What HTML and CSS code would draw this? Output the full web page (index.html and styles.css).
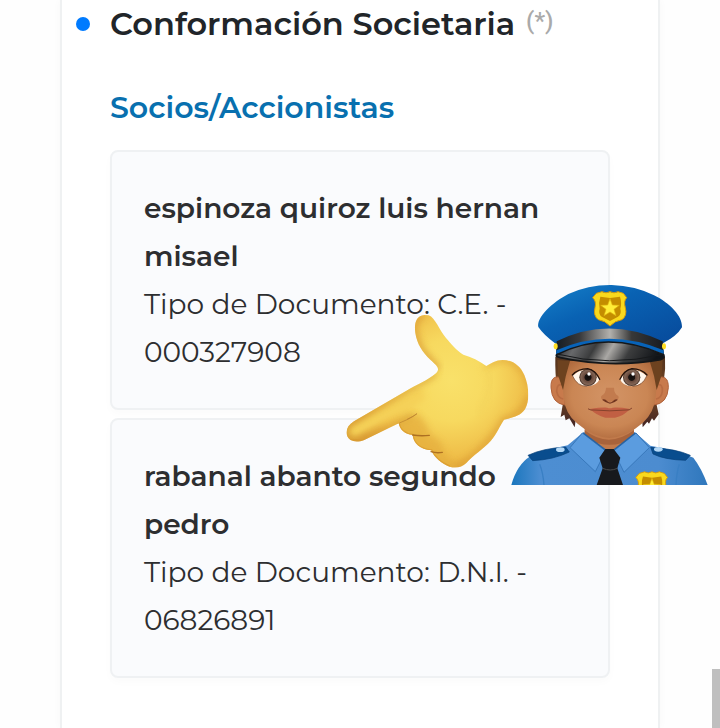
FILE: index.html
```html
<!DOCTYPE html>
<html lang="es">
<head>
    <meta charset="UTF-8">
    <meta name="viewport" content="width=device-width, initial-scale=1.0">
    <title>Conformación Societaria</title>
    <link rel="stylesheet" href="styles.css">
</head>
<body>
    <main class="page">
        <section class="panel">
            <div class="panel-header">
                <span class="bullet"></span>
                <h1>Conformación Societaria <span class="note">(*)</span></h1>
            </div>
            <div class="panel-body">
                <h2>Socios/Accionistas</h2>
                <ul class="partners">
                    <li class="card">
                        <strong>espinoza quiroz luis hernan misael</strong>
                        <p>Tipo de Documento: C.E. - 000327908</p>
                    </li>
                    <li class="card">
                        <strong>rabanal abanto segundo pedro</strong>
                        <p>Tipo de Documento: D.N.I. - 06826891</p>
                    </li>
                </ul>
            </div>
        </section>

        <!-- Pointing hand -->
        <svg class="sticker hand" viewBox="30 24 555 468" aria-hidden="true">
            <defs>
                <radialGradient id="skin" gradientUnits="userSpaceOnUse" cx="350" cy="225" r="310">
                    <stop offset="0" stop-color="#f9e16a"/>
                    <stop offset=".4" stop-color="#f7d95f"/>
                    <stop offset=".75" stop-color="#efbd48"/>
                    <stop offset="1" stop-color="#dc9e35"/>
                </radialGradient>
                <filter id="soft" x="-20%" y="-20%" width="140%" height="140%"><feGaussianBlur stdDeviation="9"/></filter>
                <clipPath id="handShape">
                    <path d="M268 30C243 32 237 56 241 84C246 117 263 143 286 164C307 183 316 190 303 205C278 226 248 238 213 258L57 349C39 360 32 374 36 391C42 410 64 414 88 405L191 355C195 374 210 389 233 390C235 415 256 433 289 436C298 459 322 477 344 485C362 491 380 487 394 474C414 451 445 433 467 408C486 386 494 363 507 344C533 338 555 334 570 313C585 287 582 243 568 210C555 181 532 165 503 165C483 165 468 175 454 183C434 167 408 156 385 149C364 137 347 115 333 99C313 76 301 38 281 31Z"/>
                </clipPath>
            </defs>
            <g clip-path="url(#handShape)">
                <rect x="20" y="20" width="580" height="480" fill="url(#skin)"/>
                <path d="M55 378L250 272" fill="none" stroke="#f5d158" stroke-width="40" stroke-linecap="round" filter="url(#soft)"/>
                <path d="M266 36C243 32 237 56 241 84C246 117 263 143 286 164L310 192" fill="none" stroke="#d99a35" stroke-width="18" opacity=".75" filter="url(#soft)"/>
                <path d="M303 205C278 226 248 238 213 258L57 349Q32 364 36 391Q44 412 88 405L191 355L235 332" fill="none" stroke="#d59a32" stroke-width="14" opacity=".75" filter="url(#soft)"/>
                <path d="M190 352Q222 345 247 328Q270 348 287 390Q322 406 326 437Q340 465 378 492L250 492L180 400Z" fill="#e4ad3d" opacity=".7" filter="url(#soft)"/>
                <path d="M360 490Q450 440 507 344Q565 333 582 270" fill="none" stroke="#d99a30" stroke-width="18" opacity=".65" filter="url(#soft)"/>
                <path d="M454 183Q485 160 520 166Q575 190 580 250" fill="none" stroke="#db9c32" stroke-width="12" opacity=".65" filter="url(#soft)"/>
                <path d="M440 190Q470 198 466 237Q462 282 430 325" fill="none" stroke="#e9bd4c" stroke-width="8" opacity=".25" filter="url(#soft)"/>
                <path d="M191 355Q195 384 233 390Q237 430 289 436Q300 465 344 485" fill="none" stroke="#d49027" stroke-width="7" opacity=".5"/>
            </g>
            <path d="M193 354Q222 344 246 326Q235 336 217 342" fill="none" stroke="#b9802f" stroke-width="2"/>
            <path d="M233 390Q257 394 283 391M288 440Q304 445 322 442" fill="none" stroke="#ad7022" stroke-width="4" stroke-linecap="round"/>
        </svg>

        <!-- Police officer -->
        <svg class="sticker officer" viewBox="33 27 591 603" aria-hidden="true">
            <defs>
                <linearGradient id="cap" x1="0" y1="0" x2="1" y2="1">
                    <stop offset="0" stop-color="#1681ca"/>
                    <stop offset=".4" stop-color="#0962b3"/>
                    <stop offset="1" stop-color="#07499a"/>
                </linearGradient>
                <linearGradient id="band">
                    <stop offset="0" stop-color="#151c23"/>
                    <stop offset=".22" stop-color="#38393b"/>
                    <stop offset=".5" stop-color="#b3b1ad"/>
                    <stop offset=".7" stop-color="#383838"/>
                    <stop offset="1" stop-color="#171b20"/>
                </linearGradient>
                <linearGradient id="visor" x1="0" y1="0" x2="1" y2=".12">
                    <stop offset="0" stop-color="#191b20"/>
                    <stop offset=".2" stop-color="#68696b"/>
                    <stop offset=".38" stop-color="#3b3c3d"/>
                    <stop offset=".54" stop-color="#aaa8a5"/>
                    <stop offset=".72" stop-color="#3c3d3e"/>
                    <stop offset="1" stop-color="#111418"/>
                </linearGradient>
                <radialGradient id="face" cx=".5" cy=".45" r=".62">
                    <stop offset="0" stop-color="#d39466"/>
                    <stop offset=".65" stop-color="#ca8654"/>
                    <stop offset="1" stop-color="#ad673b"/>
                </radialGradient>
                <linearGradient id="hair" x1="0" y1="0" x2="0" y2="1">
                    <stop offset="0" stop-color="#51311d"/>
                    <stop offset=".5" stop-color="#774923"/>
                    <stop offset="1" stop-color="#412424"/>
                </linearGradient>
                <linearGradient id="shirt">
                    <stop offset="0" stop-color="#1a76bd"/>
                    <stop offset=".15" stop-color="#4d8ed2"/>
                    <stop offset=".75" stop-color="#4c8cd0"/>
                    <stop offset="1" stop-color="#2f77bc"/>
                </linearGradient>
                <radialGradient id="iris">
                    <stop offset="0" stop-color="#100c0b"/>
                    <stop offset=".36" stop-color="#1a1311"/>
                    <stop offset=".45" stop-color="#67483b"/>
                    <stop offset=".82" stop-color="#826555"/>
                    <stop offset="1" stop-color="#3c281f"/>
                </radialGradient>
                <g id="badge">
                    <path d="M330 50Q342 57 354 50L370 55L380 68Q370 78 376 98Q382 122 366 134Q345 137 330 153Q315 137 295 134Q279 122 285 98Q290 79 278 68L289 55L306 50Q318 57 330 50Z" fill="#f9d91d" stroke="#d89b08" stroke-width="3"/>
                    <path d="M301 65L330 69L360 65Q366 84 361 101Q366 117 354 125L330 138L305 125Q294 116 299 101Q295 82 301 65Z" fill="#c48d00"/>
                    <path d="M330 71L337 90L358 91L342 103L348 122L330 111L312 122L318 103L302 91L323 90Z" fill="#ffed37" stroke="#e1b40b" stroke-width="2"/>
                </g>
            </defs>
            <!-- Hair and ears -->
            <path d="M166 245Q164 350 188 390L182 426L193 419L197 436L208 430L224 457L230 415L425 415L428 457L442 440L447 446L456 430L462 437L476 418L470 390Q500 320 495 245Z" fill="url(#hair)"/>
            <path d="M194 312Q151 292 153 338Q156 386 195 390ZM462 312Q506 292 505 338Q502 386 461 390Z" fill="#c87a4c" stroke="#b0623a" stroke-width="3"/>
            <path d="M188 330Q170 324 170 349Q174 370 190 372M470 330Q489 324 487 349Q484 370 468 372" fill="none" stroke="#b96c42" stroke-width="5"/>
            <!-- Shirt and neck -->
            <path d="M34 630Q51 569 91 544Q150 521 203 511L250 472L405 472L451 512Q535 526 580 548Q605 580 623 630Z" fill="url(#shirt)"/>
            <path d="M254 440H402V489L332 530L254 489Z" fill="#c17a4b"/>
            <path d="M254 466Q325 522 402 466L400 489Q330 530 256 489Z" fill="#a8633b"/>
            <!-- Face -->
            <path d="M205 258Q181 304 191 369Q195 415 231 445Q278 486 328 489Q381 485 429 443Q463 411 467 365Q478 306 452 258Z" fill="url(#face)"/>
            <path d="M210 258Q196 302 189 345L174 300L172 255ZM449 258Q464 302 470 345L485 300L488 255Z" fill="#6d421f"/>
            <g>
                <path d="M218 303Q254 264 299 312Q290 334 260 334Q231 333 218 303ZM360 312Q400 264 440 303Q429 332 397 334Q368 334 360 312Z" fill="#fff6ec"/>
                <circle cx="264" cy="307" r="26" fill="url(#iris)"/>
                <circle cx="395" cy="307" r="26" fill="url(#iris)"/>
                <circle cx="267" cy="297" r="5" fill="#fff"/>
                <circle cx="399" cy="297" r="5" fill="#fff"/>
                <path d="M217 300Q234 281 263 281Q287 286 299 313M360 313Q372 286 396 281Q424 281 441 300" fill="none" stroke="#24130c" stroke-width="4" stroke-linecap="round"/>
                <path d="M218 303Q231 334 262 334M440 303Q427 334 397 334" fill="none" stroke="#6e432c" stroke-width="2"/>
            </g>
            <path d="M318 338Q318 355 304 363Q300 374 315 376Q329 386 343 376Q360 374 355 363Q342 356 342 338" fill="#c27b4e"/>
            <path d="M306 374Q315 370 322 379Q330 386 338 379Q346 370 354 374Q344 383 330 386Q316 383 306 374Z" fill="#71351f"/>
            <path d="M270 402Q303 397 322 398Q330 402 338 398Q362 397 390 402Q370 424 345 428H316Q289 421 270 402Z" fill="#c15f43"/>
            <path d="M265 402Q273 407 282 405Q329 410 378 405Q388 407 395 400" fill="none" stroke="#85422c" stroke-width="3" stroke-linecap="round"/>
            <!-- Collar, tie and shoulder straps -->
            <path d="M247 474L210 518L286 590L317 528ZM408 474L448 518L372 592L341 528Z" fill="#5b9cdf" stroke="#3878bb" stroke-width="3"/>
            <path d="M250 474L317 525M406 474L341 525" stroke="#2562a2" stroke-width="4"/>
            <path d="M316 522H341L361 548L352 580L369 630H290L308 580L298 548Z" fill="#17191d"/>
            <path d="M308 580Q331 590 352 580" fill="none" stroke="#494a4b" stroke-width="3"/>
            <path d="M84 541Q128 520 197 516L208 531Q161 554 98 557ZM452 517Q530 522 571 541L557 556Q493 554 459 537Z" fill="#094d8e" stroke="#063f78" stroke-width="2"/>
            <path d="M119 568Q129 592 132 630M538 568Q530 592 528 630" fill="none" stroke="#397fc4" stroke-width="4"/>
            <ellipse cx="181" cy="524" rx="13" ry="7" fill="#b5d9f7"/>
            <ellipse cx="475" cy="523" rx="13" ry="7" fill="#b5d9f7"/>
            <!-- Cap -->
            <path d="M167 206Q132 181 115 156C109 127 157 82 205 57Q266 29 335 30Q405 32 462 61C509 84 548 123 546 157Q530 184 490 204Z" fill="url(#cap)"/>
            <path d="M170 199Q325 122 488 199L492 238Q330 161 168 238Z" fill="url(#band)"/>
            <path d="M169 226Q327 157 491 226V238Q330 170 168 240Z" fill="#0863b8"/>
            <path d="M170 239Q321 163 491 239Q496 249 482 254Q333 280 181 248Q165 244 170 239Z" fill="url(#visor)" stroke="#151719" stroke-width="5"/>
            <path d="M171 237Q326 277 490 238" fill="none" stroke="#17191b" stroke-width="3"/>
            <ellipse cx="167" cy="214" rx="6" ry="9" fill="#ffdd22"/>
            <ellipse cx="492" cy="214" rx="6" ry="9" fill="#ffdd22"/>
            <use href="#badge"/>
            <use href="#badge" transform="translate(149 544) scale(.93)"/>
        </svg>
    </main>
    <div class="scroll-thumb"></div>
</body>
</html>
```

FILE: styles.css
```css
* {
    box-sizing: border-box;
    margin: 0;
    padding: 0;
}

body {
    font-family: 'Montserrat', 'Inter', sans-serif;
    background-color: #fefefe;
    color: #2d2e30;
}

.page {
    position: relative;
    min-height: 100vh;
    padding: 0 60px;
    display: flex;
}

.panel {
    flex: 1;
    background-color: #fff;
    border: 2px solid #eff1f2;
    border-top: none;
    border-bottom: none;
    box-shadow: 0 0 8px rgba(0, 0, 0, 0.03);
}

.panel-header {
    display: flex;
    align-items: center;
    gap: 20px;
    padding-left: 14px;
}

.bullet {
    width: 14px;
    height: 14px;
    border-radius: 50%;
    background-color: #007bff;
}

h1 {
    font-size: 32px;
    line-height: 48px;
    font-weight: 600;
    color: #212529;
}

.note {
    margin-left: 2px;
    font-family: 'Roboto', sans-serif;
    font-size: 24px;
    line-height: 24px;
    font-weight: 500;
    vertical-align: 6px;
    color: #aaa;
}

.panel-body {
    padding: 36px 48px;
}

h2 {
    font-size: 30px;
    line-height: 48px;
    font-weight: 600;
    color: #0870af;
}

.partners {
    display: flex;
    flex-direction: column;
    gap: 8px;
    margin-top: 18px;
    list-style: none;
}

.card {
    padding: 32px;
    border: 2px solid #eff1f3;
    border-radius: 8px;
    background-color: #fafbfd;
    box-shadow: 0 4px 8px rgba(0, 0, 0, 0.02);
    font-size: 28px;
    line-height: 48px;
}

.card strong {
    display: block;
    font-weight: 600;
}

.card p {
    font-weight: 400;
}

/* stickers float over the cards */
.sticker {
    position: absolute;
}

.hand {
    top: 313px;
    right: 190px;
    width: 185px;
    height: 156px;
}

.officer {
    top: 284px;
    right: 12px;
    width: 197px;
    height: 201px;
}

.scroll-thumb {
    position: fixed;
    right: 0;
    bottom: 0;
    width: 8px;
    height: 59px;
    background-color: #bfbfbf;
}
```
